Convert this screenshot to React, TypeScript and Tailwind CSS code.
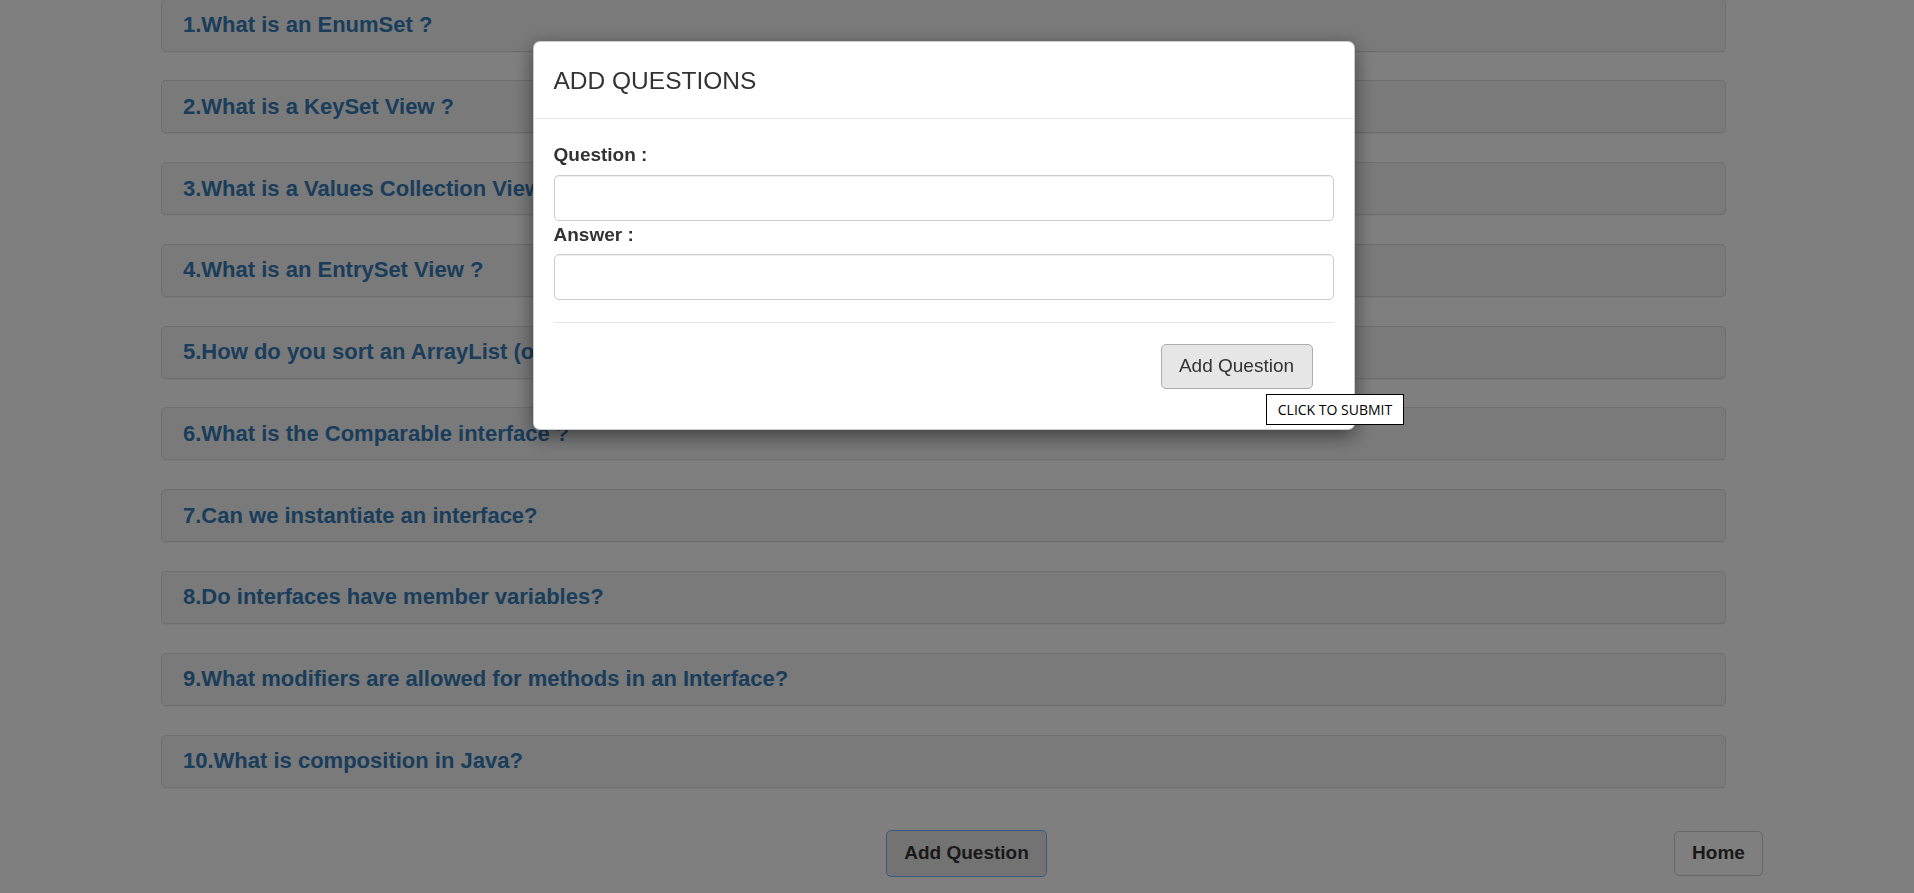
import React from "react";

const questions = [
  "1.What is an EnumSet ?",
  "2.What is a KeySet View ?",
  "3.What is a Values Collection View ?",
  "4.What is an EntrySet View ?",
  "5.How do you sort an ArrayList (or any list) of user-defined objects ?",
  "6.What is the Comparable interface ?",
  "7.Can we instantiate an interface?",
  "8.Do interfaces have member variables?",
  "9.What modifiers are allowed for methods in an Interface?",
  "10.What is composition in Java?",
];

export default function App() {
  return (
    <div
      className="relative min-h-screen overflow-hidden bg-white text-[#333]"
      style={{ fontFamily: '"Liberation Sans", Arial, sans-serif' }}
    >
      <div className="pr-[27px]">
        <ul className="mx-[161px] mt-[-1.5px] flex flex-col gap-[28.8px]">
          {questions.map((q) => (
            <li
              key={q}
              className="flex h-[53px] items-center rounded-[5px] border border-[#ddd] bg-[#f5f5f5] pl-[21px] text-[22px] font-bold leading-[1.1] text-[#337ab7] shadow-[0_1px_1px_rgba(0,0,0,0.05)]"
            >
              {q}
            </li>
          ))}
        </ul>

        <div className="mt-[42px] flex items-center justify-between pl-[886px] pr-[124px]">
          <button className="h-[47px] w-[161px] rounded-[5px] border border-[#78b0ff] bg-[#e6e6e6] text-[19px] font-bold text-[#333]">
            Add Question
          </button>
          <button className="h-[45px] w-[89px] rounded-[5px] border border-[#ccc] bg-white text-[19px] font-bold text-[#333]">
            Home
          </button>
        </div>
      </div>

      {/* backdrop */}
      <div className="fixed inset-0 bg-black/50" />

      {/* modal */}
      <div className="fixed inset-0 pr-[27px]">
        <div className="mx-auto mt-[41px] w-[822px] rounded-[7px] border border-black/20 bg-white shadow-[0_6px_19px_rgba(0,0,0,0.5)]">
          <div className="flex h-[77px] items-center border-b border-[#e5e5e5] px-[20px]">
            <h4 className="text-[24.5px] leading-[27px] font-normal text-[#333]">
              ADD QUESTIONS
            </h4>
          </div>
          <div className="px-[20px] pt-[22px] pb-[40px]">
            <label className="mb-[7px] block h-[27px] text-[19px] leading-[27px] font-bold text-[#333]">
              Question :
            </label>
            <input
              type="text"
              className="block h-[46px] w-full rounded-[5px] border border-[#ccc] bg-white shadow-[inset_0_1px_1px_rgba(0,0,0,0.075)] outline-none"
            />
            <label className="mb-[6px] block h-[27px] text-[19px] leading-[27px] font-bold text-[#333]">
              Answer :
            </label>
            <input
              type="text"
              className="block h-[46px] w-full rounded-[5px] border border-[#ccc] bg-white shadow-[inset_0_1px_1px_rgba(0,0,0,0.075)] outline-none"
            />
            <hr className="mt-[22px] border-t border-[#e5e5e5]" />
            <div className="mt-[21px] flex justify-end pr-[21px]">
              <button className="h-[45px] w-[152px] rounded-[5px] border border-[#adadad] bg-[#e6e6e6] text-[19px] font-normal text-[#333]">
                Add Question
              </button>
            </div>
          </div>
        </div>
      </div>

      {/* native tooltip */}
      <div
        className="fixed left-[1266px] top-[394px] flex h-[31px] w-[138px] items-center justify-center border border-black bg-white text-[14px] text-black"
        style={{ fontFamily: '"Open Sans", "Noto Sans", sans-serif' }}
      >
        CLICK TO SUBMIT
      </div>
    </div>
  );
}
